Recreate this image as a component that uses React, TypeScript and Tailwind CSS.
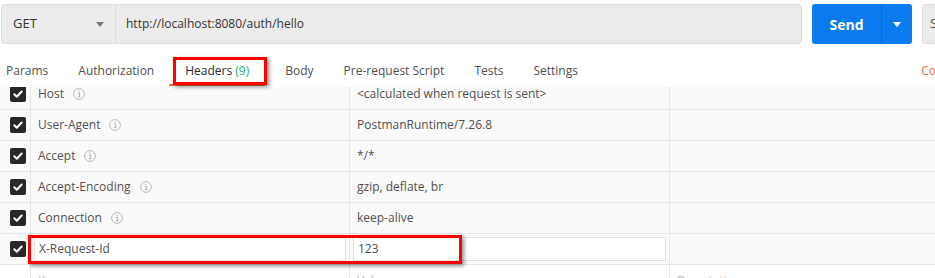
import React from "react";

const font = { fontFamily: '"Open Sans", "Liberation Sans", sans-serif' };

function Info() {
  return (
    <svg width="12" height="12" viewBox="0 0 12 12" className="shrink-0">
      <circle cx="6" cy="6" r="5.4" fill="none" stroke="#b8b8b8" strokeWidth="1" />
      <rect x="5.5" y="2.8" width="1.1" height="1.1" fill="#b0b0b0" />
      <path d="M4.9 5.2h1.7v3.4M4.8 8.7h2.6" fill="none" stroke="#b0b0b0" strokeWidth="1" />
    </svg>
  );
}

function Check() {
  return (
    <div className="w-[16px] h-[16px] rounded-[2px] bg-[#282828] flex items-center justify-center">
      <svg width="12" height="12" viewBox="0 0 12 12">
        <path d="M2.3 6.3l2.5 2.4 4.9-5.2" fill="none" stroke="#fff" strokeWidth="2" strokeLinecap="round" strokeLinejoin="round" />
      </svg>
    </div>
  );
}

const rows = [
  { k: "Host", v: "<calculated when request is sent>", info: true },
  { k: "User-Agent", v: "PostmanRuntime/7.26.8", info: true },
  { k: "Accept", v: "*/*", info: true },
  { k: "Accept-Encoding", v: "gzip, deflate, br", info: true },
  { k: "Connection", v: "keep-alive", info: true },
];

export default function App() {
  return (
    <div className="relative w-[935px] h-[278px] overflow-hidden bg-white text-[12px] text-[#505050]" style={font}>
      <div className="w-[1000px]">
        {/* top bar */}
        <div className="flex pt-[4px] pl-[1px] h-[44px]">
          <div className="flex flex-1 h-[40px] rounded-[3px] border border-[#dcdcdc] bg-[#ececec]">
            <div className="w-[114px] flex items-center justify-between pl-[11px] pr-[11px] border-r border-[#dcdcdc] text-[13px] text-[#333]">
              <span>GET</span>
              <svg width="8" height="5" viewBox="0 0 8 5"><path d="M0 0h8L4 5z" fill="#777" /></svg>
            </div>
            <div className="flex-1 flex items-center pl-[10px] text-[12px] text-[#333]">http://localhost:8080/auth/hello</div>
          </div>
          <div className="ml-[10px] w-[100px] h-[40px] rounded-[3px] bg-[#097bed] flex">
            <div className="w-[69px] flex items-center justify-center text-white font-bold text-[14px]">Send</div>
            <div className="w-px bg-[#0569d3]" />
            <div className="flex-1 flex items-center justify-center">
              <svg width="8" height="5" viewBox="0 0 8 5"><path d="M0 0h8L4 5z" fill="#fff" /></svg>
            </div>
          </div>
          <div className="ml-[10px] w-[78px] h-[40px] rounded-[3px] bg-[#ececec] border border-[#dcdcdc] flex items-center pl-[7px] text-[13px] text-[#555]">Save</div>
        </div>
        {/* tabs */}
        <div className="flex h-[43px] pt-[18px] pl-[6px] items-start">
          {["Params", "Authorization"].map((t, i) => (
            <div key={t} className={`leading-[18px] pb-[4px] border-b-2 border-transparent ${i === 0 ? "" : "ml-[30px]"}`}>{t}</div>
          ))}
          <div className="ml-[15px] px-[16px] leading-[18px] pb-[4px] border-b-2 border-[#f26b3a] text-[#282828]">
            Headers <span className="text-[#2fa86b]">(9)</span>
          </div>
          {["Body", "Pre-request Script", "Tests", "Settings"].map((t, i) => (
            <div key={t} className={`leading-[18px] pb-[4px] border-b-2 border-transparent ${i === 0 ? "ml-[20px]" : "ml-[30px]"}`}>{t}</div>
          ))}
          <div className="flex-1" />
          <div className="leading-[18px] text-[#f26b3a] mr-[35px]">Cookies</div>
        </div>
      </div>
      {/* table */}
      <div className="h-[191px] overflow-hidden">
        <div className="-mt-[8px] grid grid-cols-[31px_319px_320px_1fr]">
          {rows.map((r) => (
            <React.Fragment key={r.k}>
              <div className="h-[31px] bg-[#fafafa] border-r border-b border-[#e6e6e6] flex items-center justify-end pr-[4px]"><Check /></div>
              <div className="h-[31px] bg-[#fafafa] border-r border-b border-[#e6e6e6] flex items-center pl-[7px] gap-[9px]">
                <span>{r.k}</span>
                {r.info && <Info />}
              </div>
              <div className="h-[31px] bg-[#fafafa] border-r border-b border-[#e6e6e6] flex items-center pl-[7px]">{r.v}</div>
              <div className="h-[31px] bg-[#fafafa] border-b border-[#e6e6e6]" />
            </React.Fragment>
          ))}
          <div className="h-[31px] bg-[#fafafa] border-r border-b border-[#e6e6e6] flex items-center justify-end pr-[4px]"><Check /></div>
          <div className="h-[31px] bg-[#fafafa] border-r border-b border-[#e6e6e6] p-[3px]">
            <div className="h-full bg-white border border-[#e0e0e0] flex items-center pl-[4px]">X-Request-Id</div>
          </div>
          <div className="h-[31px] bg-[#fafafa] border-r border-b border-[#e6e6e6] p-[3px]">
            <div className="h-full bg-white border border-[#e0e0e0] flex items-center pl-[4px]">123</div>
          </div>
          <div className="h-[31px] bg-[#fafafa] border-b border-[#e6e6e6]" />
          <div className="h-[31px] bg-white border-r border-[#e6e6e6]" />
          <div className="h-[31px] bg-white border-r border-[#e6e6e6] pl-[7px] pt-[7px] text-[#b4b4b4]">Key</div>
          <div className="h-[31px] bg-white border-r border-[#e6e6e6] pl-[7px] pt-[7px] text-[#b4b4b4]">Value</div>
          <div className="h-[31px] bg-white pl-[7px] pt-[7px] text-[#b4b4b4]">Description</div>
        </div>
      </div>
      {/* annotation boxes */}
      <div className="absolute left-[173px] top-[57px] w-[94px] h-[28px] border-[3px] border-[#ff0000] shadow-[2px_2px_4px_rgba(0,0,0,0.45)]" />
      <div className="absolute left-[28px] top-[235px] w-[434px] h-[29px] border-[3px] border-[#ff0000] shadow-[2px_2px_4px_rgba(0,0,0,0.45)]" />
    </div>
  );
}
